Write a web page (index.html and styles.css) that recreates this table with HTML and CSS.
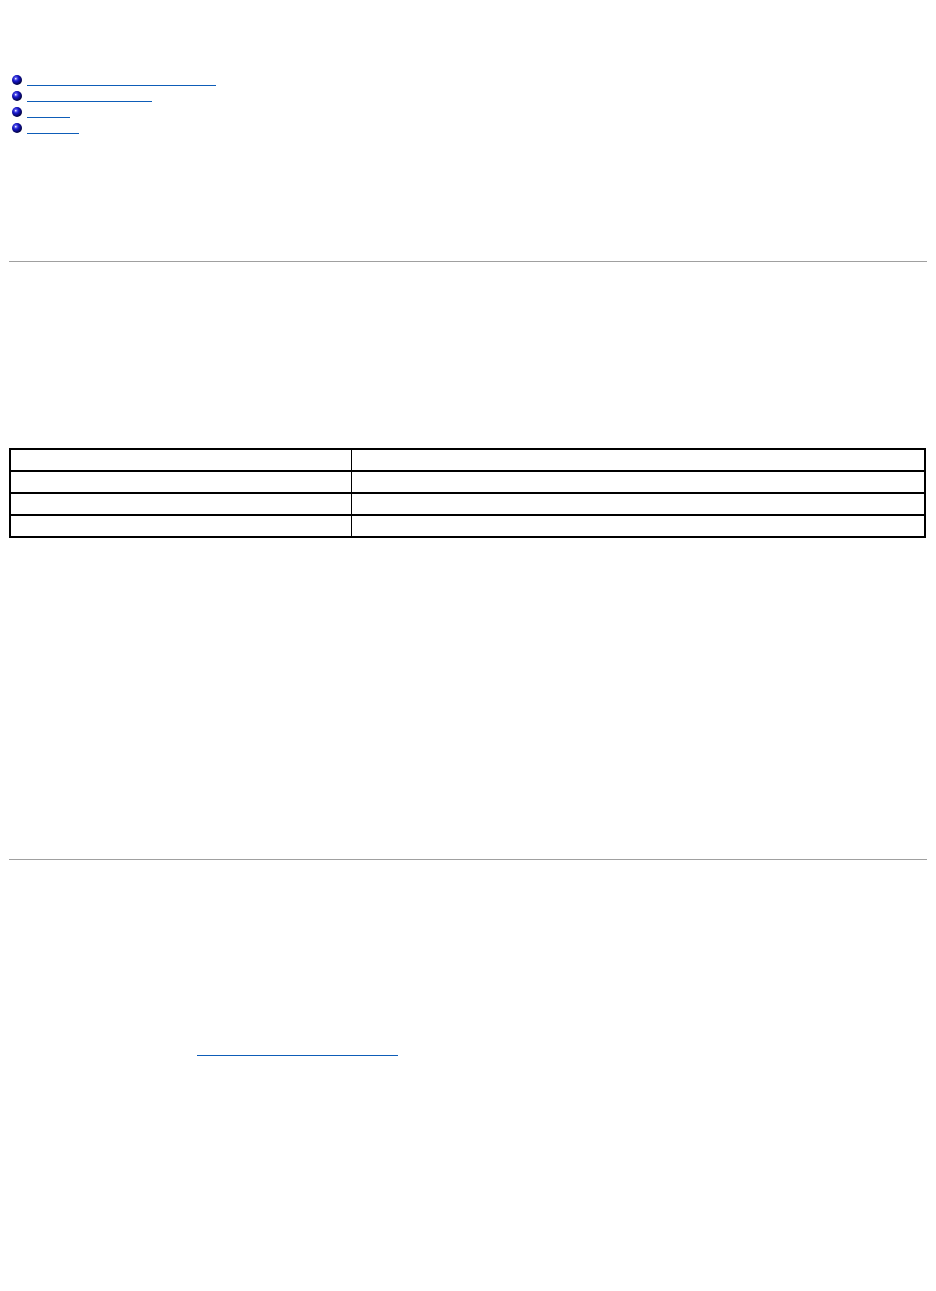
FILE: index.html
```html
<!DOCTYPE html>
<html lang="en">
<head>
  <meta charset="UTF-8" />
  <title>Page</title>
  <link rel="stylesheet" href="styles.css">
</head>
<body>
  <div class="page-head"></div>

  <ul class="toc">
    <li>
      <svg class="bullet" viewBox="0 0 10 10"><defs><radialGradient id="ball" cx="0.38" cy="0.35" r="0.65"><stop offset="0" stop-color="#8a8aff"/><stop offset="0.45" stop-color="#1616c8"/><stop offset="1" stop-color="#00003a"/></radialGradient></defs><circle cx="5" cy="5" r="5" fill="url(#ball)"/><rect x="3" y="3" width="1.4" height="1.4" fill="#e8e8ff"/></svg>
      <a href="#" class="toc-link w1"></a>
    </li>
    <li>
      <svg class="bullet" viewBox="0 0 10 10"><circle cx="5" cy="5" r="5" fill="url(#ball)"/><rect x="3" y="3" width="1.4" height="1.4" fill="#e8e8ff"/></svg>
      <a href="#" class="toc-link w2"></a>
    </li>
    <li>
      <svg class="bullet" viewBox="0 0 10 10"><circle cx="5" cy="5" r="5" fill="url(#ball)"/><rect x="3" y="3" width="1.4" height="1.4" fill="#e8e8ff"/></svg>
      <a href="#" class="toc-link w3"></a>
    </li>
    <li>
      <svg class="bullet" viewBox="0 0 10 10"><circle cx="5" cy="5" r="5" fill="url(#ball)"/><rect x="3" y="3" width="1.4" height="1.4" fill="#e8e8ff"/></svg>
      <a href="#" class="toc-link w4"></a>
    </li>
  </ul>

  <hr class="rule first">

  <table class="spec">
    <tr><td class="key"></td><td></td></tr>
    <tr><td class="key"></td><td></td></tr>
    <tr><td class="key"></td><td></td></tr>
    <tr><td class="key"></td><td></td></tr>
  </table>

  <hr class="rule second">

  <div class="back">
    <a href="#" class="back-link"></a>
  </div>
</body>
</html>
```

FILE: styles.css
```css
body {
  margin: 0;
  padding: 0 9px;
  background: #ffffff;
  font-family: "Liberation Sans", Arial, sans-serif;
  font-size: 11px;
}

.page-head {
  height: 72px;
}

.toc {
  list-style: none;
  margin: 0;
  padding: 0 0 0 3px;
}

.toc li {
  display: flex;
  align-items: center;
  height: 16px;
  gap: 5px;
}

.bullet {
  width: 10px;
  height: 10px;
  flex: none;
}

.toc-link {
  display: block;
  height: 10px;
  margin-top: 1px;
  border-bottom: 1px solid #0e5db8;
}

.w1 { width: 189px; }
.w2 { width: 125px; }
.w3 { width: 43px; }
.w4 { width: 52px; }

.rule {
  border: 0;
  border-top: 1px solid #a0a0a0;
  height: 0;
  margin: 0;
}

.rule.first {
  margin-top: 125px;
}

.spec {
  width: 917px;
  margin-top: 186px;
  border-collapse: collapse;
  border: 2px solid #000000;
}

.spec td {
  height: 20px;
  padding: 0;
  border-top: 2px solid #000000;
  border-left: 1px solid #000000;
}

.spec td.key {
  width: 340px;
  border-left: 0;
}

.rule.second {
  margin-top: 321px;
}

.back {
  margin-top: 185px;
  padding-left: 188px;
}

.back-link {
  display: block;
  width: 201px;
  height: 10px;
  border-bottom: 1px solid #0e5db8;
}
```
